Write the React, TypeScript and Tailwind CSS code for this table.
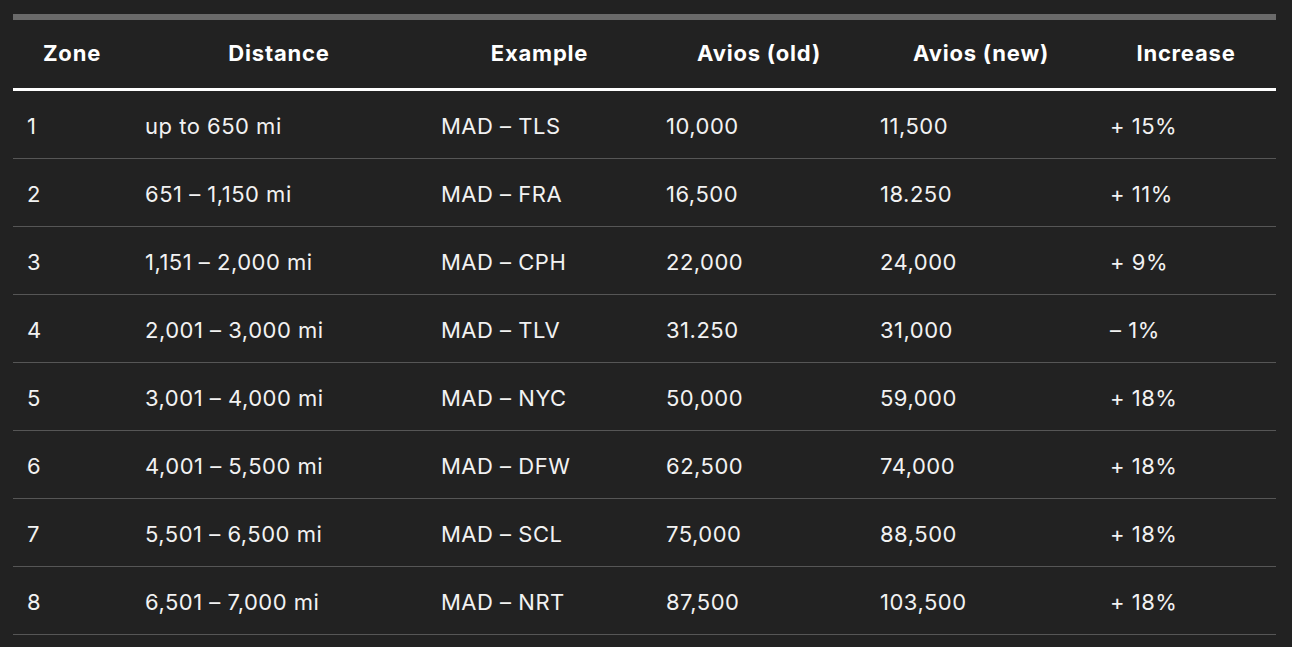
import React from "react";

const headers = ["Zone", "Distance", "Example", "Avios (old)", "Avios (new)", "Increase"];
const rows: string[][] = [
  ["1", "up to 650 mi", "MAD – TLS", "10,000", "11,500", "+ 15%"],
  ["2", "651 – 1,150 mi", "MAD – FRA", "16,500", "18.250", "+ 11%"],
  ["3", "1,151 – 2,000 mi", "MAD – CPH", "22,000", "24,000", "+ 9%"],
  ["4", "2,001 – 3,000 mi", "MAD – TLV", "31.250", "31,000", "– 1%"],
  ["5", "3,001 – 4,000 mi", "MAD – NYC", "50,000", "59,000", "+ 18%"],
  ["6", "4,001 – 5,500 mi", "MAD – DFW", "62,500", "74,000", "+ 18%"],
  ["7", "5,501 – 6,500 mi", "MAD – SCL", "75,000", "88,500", "+ 18%"],
  ["8", "6,501 – 7,000 mi", "MAD – NRT", "87,500", "103,500", "+ 18%"],
];

export default function App() {
  return (
    <div
      className="w-[1292px] h-[647px] bg-[#222222] pl-[13px] pt-[14px] overflow-hidden text-white"
      style={{ fontFamily: "Inter, 'Noto Sans', sans-serif" }}
    >
      <div className="w-[1263px]">
        <div className="h-[6px] bg-[#6a6a6a]" />
        <div className="grid grid-cols-[118px_296px_225px_214px_230px_180px] h-[71px] items-center border-b-[3px] border-white">
          {headers.map((h) => (
            <div key={h} className="text-center font-bold text-[22px] tracking-[0.8px] pb-[1px]">
              {h}
            </div>
          ))}
        </div>
        {rows.map((r, i) => (
          <div
            key={i}
            className="grid grid-cols-[118px_296px_225px_214px_230px_180px] h-[68px] items-center border-b border-[#565656]"
          >
            {r.map((c, j) => (
              <div key={j} className="pl-[14px] text-[22px] text-[#f2f2f2] tracking-[0.5px] pt-[3px]">
                {c}
              </div>
            ))}
          </div>
        ))}
      </div>
    </div>
  );
}
